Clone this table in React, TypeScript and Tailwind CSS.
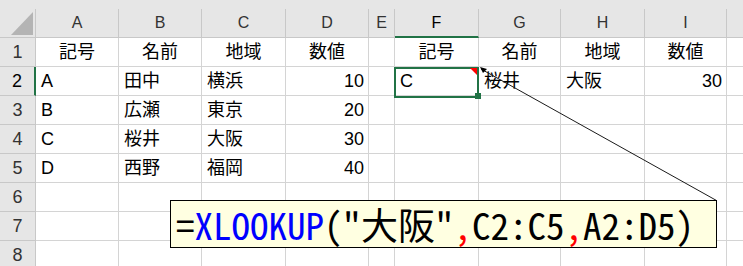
import type { ReactNode } from "react"

const COLS = ["A", "B", "C", "D", "E", "F", "G", "H", "I"]
const WIDTHS = ["w-[83px]", "w-[83px]", "w-[84px]", "w-[83px]", "w-[26px]", "w-[84px]", "w-[82px]", "w-[84px]", "w-[82px]"]

type Cell = { v: string; align?: "l" | "c" | "r" }

const ROWS: Cell[][] = [
  [
    { v: "記号", align: "c" }, { v: "名前", align: "c" }, { v: "地域", align: "c" }, { v: "数値", align: "c" }, { v: "" },
    { v: "記号", align: "c" }, { v: "名前", align: "c" }, { v: "地域", align: "c" }, { v: "数値", align: "c" },
  ],
  [
    { v: "A" }, { v: "田中" }, { v: "横浜" }, { v: "10", align: "r" }, { v: "" },
    { v: "C" }, { v: "桜井" }, { v: "大阪" }, { v: "30", align: "r" },
  ],
  [{ v: "B" }, { v: "広瀬" }, { v: "東京" }, { v: "20", align: "r" }],
  [{ v: "C" }, { v: "桜井" }, { v: "大阪" }, { v: "30", align: "r" }],
  [{ v: "D" }, { v: "西野" }, { v: "福岡" }, { v: "40", align: "r" }],
  [],
  [],
  [],
]

const ALIGN = { l: "justify-start pl-[5px]", c: "justify-center", r: "justify-end pr-[4px]" }

function HeaderCell({ children, className = "" }: { children?: ReactNode; className?: string }) {
  return (
    <div className={`h-[29px] shrink-0 flex items-center justify-center border-r border-b border-[#c8c8c8] bg-[#e6e6e6] text-[16px] text-[#333] ${className}`}>
      {children}
    </div>
  )
}

export default function App() {
  return (
    <div
      className="relative w-[743px] h-[266px] overflow-hidden bg-white"
      style={{ fontFamily: '"Liberation Sans", "Noto Sans CJK JP", sans-serif' }}
    >
      {/* strip above column headers */}
      <div className="h-[9px] bg-[#e6e6e6]" />

      {/* column headers */}
      <div className="flex">
        <HeaderCell className="w-[36px] relative">
          <svg width="36" height="29" className="absolute left-0 top-0">
            <polygon points="33,3 33,26 11,26" fill="#b4b4b4" />
          </svg>
        </HeaderCell>
        {COLS.map((c, i) => (
          <HeaderCell
            key={c}
            className={`${WIDTHS[i]} ${c === "F" ? "border-b-2 border-b-[#217346] text-black" : ""}`}
          >
            {c}
          </HeaderCell>
        ))}
        <HeaderCell className="flex-1 border-r-0" />
      </div>

      {/* rows */}
      {ROWS.map((row, r) => (
        <div key={r} className="flex">
          <HeaderCell
            className={`w-[36px] text-[18px] ${r === 1 ? "border-r-2 border-r-[#217346] text-black" : ""}`}
          >
            {r + 1}
          </HeaderCell>
          {COLS.map((c, i) => {
            const cell = row[i]
            return (
              <div
                key={c}
                className={`${WIDTHS[i]} h-[29px] shrink-0 flex items-center border-r border-b border-[#d4d4d4] text-[18px] text-black whitespace-nowrap ${ALIGN[cell?.align ?? "l"]}`}
              >
                {cell?.v}
              </div>
            )
          })}
          <div className="flex-1 h-[29px] border-b border-[#d4d4d4]" />
        </div>
      ))}

      {/* selection on F2 */}
      <div className="absolute left-[394px] top-[67px] w-[85px] h-[31px] border-2 border-[#217346]" />
      <div className="absolute left-[475px] top-[93px] w-[6px] h-[6px] bg-[#217346]" />
      {/* comment marker */}
      <svg className="absolute left-[470px] top-[68px]" width="7" height="7">
        <polygon points="0,0 7,0 7,7" fill="#ff0000" />
      </svg>

      {/* callout leader */}
      <svg className="absolute left-0 top-0 pointer-events-none" width="743" height="266">
        <line x1="481" y1="69" x2="716.5" y2="200.5" stroke="#1a1a1a" strokeWidth="1" />
        <polygon points="480,67 487,69 483,73" fill="#000" />
      </svg>

      {/* callout */}
      <div
        className="absolute left-[170px] top-[200px] w-[547px] h-[48px] bg-[#ffffe1] border border-black flex items-center pl-[5px] text-[37px] font-light leading-none text-black whitespace-nowrap"
        style={{ fontFamily: '"Noto Sans Mono CJK JP", "Noto Sans CJK JP", "DejaVu Sans Mono", monospace' }}
      >
        <span>=</span>
        <span className="text-[#0000ff]">XLOOKUP</span>
        <span>("大阪"</span>
        <span className="text-[#ff0000]">,</span>
        <span>C2:C5</span>
        <span className="text-[#ff0000]">,</span>
        <span>A2:D5)</span>
      </div>
    </div>
  )
}
